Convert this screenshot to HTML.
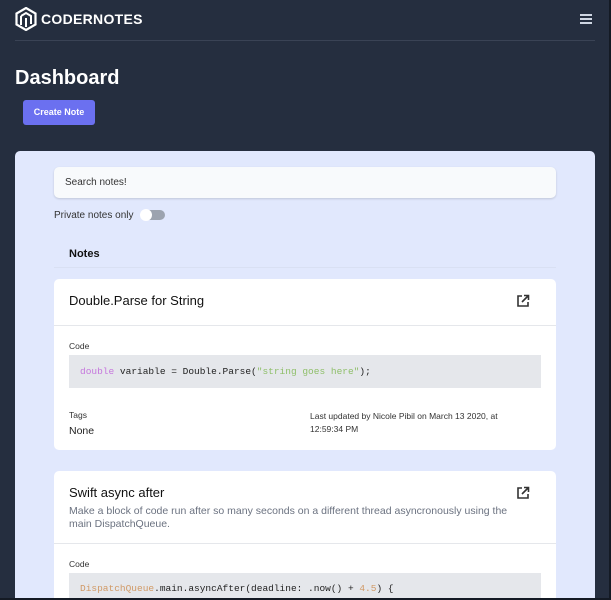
<!DOCTYPE html>
<html style="width:611px;height:600px;overflow:hidden"><head><style>
*{box-sizing:border-box;margin:0;padding:0}
body{width:611px;height:600px;overflow:hidden;background:#252e3f;font-family:"Liberation Sans",sans-serif;position:relative}
.edge{position:absolute;right:0;top:0;width:2px;height:600px;background:#141a24}
.bot{position:absolute;left:0;bottom:0;width:611px;height:2px;background:#141a24}
.hdr{position:absolute;left:15px;top:0;width:580px;height:41px;border-bottom:1px solid #3a4355}
.logo{position:absolute;left:0;top:7px}
.brand{position:absolute;left:26px;top:11px;color:#fff;font-size:14px;font-weight:bold;letter-spacing:0.3px}
.ham{position:absolute;left:565px;top:14px;width:12px}
.ham i{display:block;height:1.5px;background:#cfd6e2;margin-bottom:2.7px}
h1{position:absolute;left:15px;top:67px;color:#fff;font-size:20px;font-weight:bold}
.btn{position:absolute;left:23px;top:100px;width:72px;height:25px;background:#6b70f0;border-radius:3px;color:#fff;font-size:9px;font-weight:bold;text-align:center;line-height:25px}
.panel{position:absolute;left:15px;top:151px;width:580px;height:447px;background:#e1e8fd;border-radius:5px 5px 0 0;overflow:hidden}
.search{position:absolute;left:39px;top:16px;width:502px;height:31px;background:#f8fafc;border-radius:5px;box-shadow:0 1px 2px rgba(0,0,0,.15);font-size:10px;color:#333;padding:10px 11px}
.priv{position:absolute;left:39px;top:59px;font-size:10px;color:#333}
.tog{position:absolute;left:126px;top:59px;width:24px;height:10px;background:#9ca3af;border-radius:5px}
.tog:before{content:"";position:absolute;left:-1px;top:-1px;width:12px;height:12px;border-radius:6px;background:#fff}
.notes{position:absolute;left:39px;top:88px;width:502px;height:29px;border-bottom:1px solid #d9e0f3;font-size:11px;font-weight:bold;color:#111;padding-left:15px;padding-top:9px}
.card{position:absolute;left:39px;width:502px;background:#fff;border-radius:5px}
.card h2{position:absolute;left:15px;font-size:13px;font-weight:normal;color:#111}
.ext{position:absolute;left:462px}
.sep{position:absolute;left:0;width:502px;height:1px;background:#e5e7eb}
.lbl{position:absolute;left:15px;font-size:8.5px;color:#333}
.code{position:absolute;left:15px;width:472px;background:#e5e7eb;font-family:"Liberation Mono",monospace;font-size:9.5px;color:#222;padding-left:11px}
.desc{position:absolute;left:15px;top:34px;font-size:10.5px;color:#6b7280;line-height:13px;width:450px}
</style></head><body>
<div class="hdr">
<svg class="logo" width="22" height="24" viewBox="0 0 22 24"><path d="M11 1L20.5 6.5V17.5L11 23L1.5 17.5V6.5Z" fill="none" stroke="#fff" stroke-width="2.2"/><path d="M6 9L11 6L16 9V17M6 9V18M11 11V20" fill="none" stroke="#fff" stroke-width="2"/></svg>
<div class="brand">CODERNOTES</div>
<div class="ham"><i></i><i></i><i></i></div>
</div>
<h1>Dashboard</h1>
<div class="btn">Create Note</div>
<div class="panel">
<div class="search">Search notes!</div>
<div class="priv">Private notes only</div>
<div class="tog"></div>
<div class="notes">Notes</div>
<div class="card" style="top:128px;height:171px">
<h2 style="top:14px">Double.Parse for String</h2>
<svg class="ext" style="top:15px" width="14" height="14" viewBox="0 0 14 14" fill="none" stroke="#333" stroke-width="1.6"><path d="M6 2H2V12H12V8M8 1.5H12.5V6M12.5 1.5L6 8"/></svg>
<div class="sep" style="top:46px"></div>
<div class="lbl" style="top:62px">Code</div>
<div class="code" style="top:76px;height:33px;line-height:33px"><span style="color:#c678dd">double</span> variable = Double.Parse(<span style="color:#8fbf6a">"string goes here"</span>);</div>
<div class="lbl" style="top:131px">Tags</div>
<div style="position:absolute;left:15px;top:146px;font-size:10.5px;color:#222">None</div>
<div style="position:absolute;left:256px;top:131px;font-size:8.5px;color:#333;line-height:13px;width:220px">Last updated by Nicole Pibil on March 13 2020, at 12:59:34 PM</div>
</div>
<div class="card" style="top:320px;height:127px;border-radius:5px 5px 0 0">
<h2 style="top:14px">Swift async after</h2>
<svg class="ext" style="top:15px" width="14" height="14" viewBox="0 0 14 14" fill="none" stroke="#333" stroke-width="1.6"><path d="M6 2H2V12H12V8M8 1.5H12.5V6M12.5 1.5L6 8"/></svg>
<div class="desc">Make a block of code run after so many seconds on a different thread asyncronously using the main DispatchQueue.</div>
<div class="sep" style="top:72px"></div>
<div class="lbl" style="top:88px">Code</div>
<div class="code" style="top:102px;height:25px;padding-top:10px"><span style="color:#d19a66">DispatchQueue</span>.main.asyncAfter(deadline: .now() + <span style="color:#d19a66">4.5</span>) {</div>
</div>
</div>
<div class="edge"></div><div class="bot"></div>
</body></html>
